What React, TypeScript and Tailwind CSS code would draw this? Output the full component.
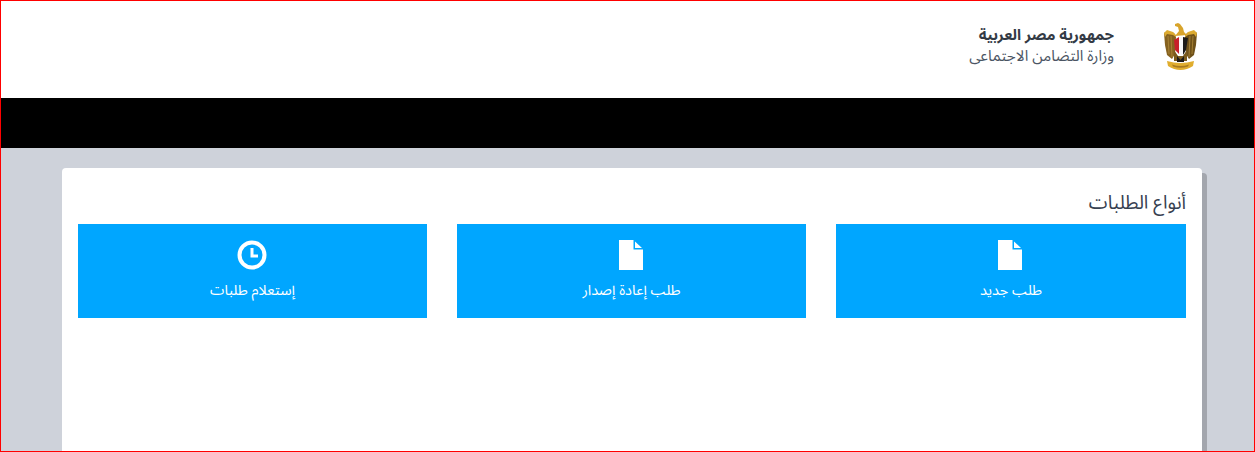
function EagleLogo() {
  return (
    <svg width="34" height="47" viewBox="0 0 34 47" className="block">
      {/* wings */}
      <path d="M0 10 L3 8 L10 10 L12 14 L11 31 L8 36 L3 32 L1 22 Z" fill="#86621f" />
      <path d="M33 10 L30 8 L23 10 L21 14 L22 31 L25 36 L30 32 L32 22 Z" fill="#6f5119" />
      <path d="M4 13 L5 31 M7 13 L8 34 M29 13 L28 31 M26 13 L25 34" stroke="#b08a3a" strokeWidth="0.8" fill="none" />
      <path d="M0 10 L3 7 L9 9 L12 12 L12 14 L9 12 L3 11 L1 14 Z" fill="#dcaa30" />
      <path d="M33 10 L30 7 L24 9 L21 12 L21 14 L24 12 L30 11 L32 14 Z" fill="#dcaa30" />
      {/* head and neck */}
      <path d="M11 1 L14 0 L16 1 L19 5 L20 9 L23 12 L11 13 L15 8 L14 4 L11 3 Z" fill="#d8a42c" />
      {/* shield */}
      <path d="M10 17 L15 14 V31 L11 27 Z" fill="#c8202a" />
      <path d="M15 14 H19 V32 H15 Z" fill="#f7f7f7" />
      <path d="M19 14 L24 15 L22 27 L19 32 Z" fill="#1c1a18" />
      {/* legs and tail */}
      <path d="M10 27 L14 33 L19 33 L23 27 L23 38 H10 Z" fill="#7a5a1c" />
      <path d="M13 33 L16.5 37 L20 33 L20 39 H13 Z" fill="#1c1a18" />
      {/* scroll */}
      <path d="M3 38 Q10 40 16.5 40 Q23 40 30 38 L29 43 Q23 47 16.5 47 Q10 47 4 43 Z" fill="#e0ad2e" />
      <path d="M8 41.5 Q16.5 44.5 25 41.5 L24 43.5 Q16.5 46 9 43.5 Z" fill="#a87a1e" />
    </svg>
  );
}

function FileIcon() {
  return (
    <svg width="24" height="30" viewBox="0 0 24 30" className="block" fill="#fff">
      <path d="M0 0 H14.5 V9.5 H24 V30 H0 Z" />
      <path d="M16 1.5 L23 8 H16 Z" />
    </svg>
  );
}

function ClockIcon() {
  return (
    <svg width="30" height="30" viewBox="0 0 30 30" className="block" fill="none" stroke="#fff">
      <circle cx="15" cy="15" r="12.5" strokeWidth="4" />
      <path d="M15 8 V16 H21" strokeWidth="3" />
    </svg>
  );
}

function RequestTile({ label, icon }: { label: string; icon: React.ReactNode }) {
  return (
    <a className="flex h-[94px] flex-col items-center bg-[#00a6ff] pt-4 text-white">
      <div className="flex h-[30px] -translate-x-px items-center">{icon}</div>
      <span className="mt-[10px] text-[14.5px] leading-[22px]">{label}</span>
    </a>
  );
}

export default function App() {
  return (
    <div
      dir="rtl"
      className="h-[452px] overflow-hidden border border-[#ff0000] bg-[#ced2da] font-['Noto_Sans_Arabic','Cairo','DejaVu_Sans',sans-serif]"
    >
      <header className="flex h-[97px] items-center bg-white pr-[56px]">
        <div className="mt-[-6px]">
          <EagleLogo />
        </div>
        <div className="mr-[50px] mt-[-8px] text-right">
          <div className="text-[15px] leading-[21px] font-bold text-[#333a45]">جمهورية مصر العربية</div>
          <div className="text-[15.2px] leading-[21px] text-[#4b5563]">وزارة التضامن الاجتماعى</div>
        </div>
      </header>
      <div className="h-[50px] bg-black" />
      <main className="pt-5 pr-[52px] pl-[61px]">
        <section className="h-[300px] rounded-t-[4px] bg-white px-4 pt-[23px] shadow-[5px_5px_0_0_#a3a6ad]">
          <h2 className="mb-[9px] h-[24px] text-[19px] leading-[24px] font-normal text-[#374151]">أنواع الطلبات</h2>
          <div className="grid grid-cols-[350px_349px_349px] gap-[30px]">
            <RequestTile label="طلب جديد" icon={<FileIcon />} />
            <RequestTile label="طلب إعادة إصدار" icon={<FileIcon />} />
            <RequestTile label="إستعلام طلبات" icon={<ClockIcon />} />
          </div>
        </section>
      </main>
    </div>
  );
}
